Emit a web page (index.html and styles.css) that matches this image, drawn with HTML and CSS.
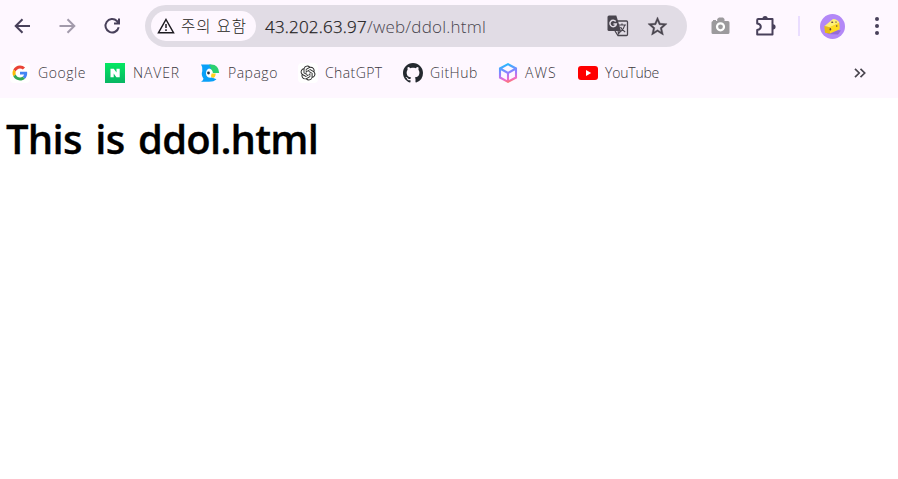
FILE: index.html
```html
<!DOCTYPE html>
<html lang="ko">
<head>
<meta charset="utf-8">
<title>ddol.html</title>
<link rel="stylesheet" href="styles.css">
</head>
<body>
<header class="browser">
  <div class="toolbar">
    <nav class="navigation">
      <svg class="icon" viewBox="0 0 20 20"><path class="line" d="M18 10H3.500M10.500 3.200 3.700 10l6.800 6.800"/></svg>
      <svg class="icon disabled" viewBox="0 0 20 20"><path class="line" d="M2.500 10H17M10.500 3.200l6.800 6.800-6.800 6.800"/></svg>
      <svg class="icon" viewBox="0 0 20 20"><path class="line" d="M16.700 11.300A6.700 6.700 0 1 1 14.900 5l2 2.200M17 2.600v5h-5"/></svg>
    </nav>
    <div class="omnibox">
      <div class="security">
        <svg class="warning" viewBox="0 0 18 16"><path d="M9 1.500 16.500 14.700h-15Z" fill="none" stroke="#1d1b20" stroke-width="1.500"/><path d="M9 6v4M9 11.200v1.800" stroke="#1d1b20" stroke-width="1.500"/></svg>
        <span>주의 요함</span>
      </div>
      <div class="address"><span class="host">43.202.63.97</span><span class="path">/web/ddol.html</span></div>
      <svg class="translate" viewBox="0 0 22 22"><path d="M9 6h10.500q1 0 1 1v12.500q0 1-1 1H11L8 16" fill="#e1dce5" stroke="#49454e" stroke-width="1.300"/><path d="M2 0.500h7.300L14 16H2Q.5 16 .5 14.500V2Q.5.5 2 .5Z" fill="#49454e"/><path d="m10.500 16.200h3.400l-2.600 4Z" fill="#49454e"/><path d="M8.700 6.500A3.200 3.200 0 1 0 9.300 9H6.500" fill="none" stroke="#e1dce5" stroke-width="1.500"/><path d="M12 10h7M15 8.500V10M17.800 10q-.8 4-4.600 7M13.500 12q1.500 3.200 4.700 5" fill="none" stroke="#49454e" stroke-width="1.200"/></svg>
      <svg class="star" viewBox="0 0 24 24"><path fill="#49454e" stroke="#49454e" stroke-width=".4" d="M22 9.240l-7.190-.62L12 2 9.190 8.630 2 9.240l5.460 4.730L5.820 21 12 17.270 18.180 21l-1.630-7.030L22 9.240zM12 15.400l-3.760 2.270 1-4.280-3.320-2.880 4.380-.38L12 6.100l1.710 4.040 4.380.38-3.320 2.880 1 4.280L12 15.400z"/></svg>
    </div>
    <svg class="camera" viewBox="0 0 19 18"><path fill="#9c9a9d" d="M2 4V3h3v1h1.200V2L8 .5h4L13.500 2v2H17q1.500 0 1.500 1.500v10Q18.500 17 17 17H2Q.5 17 .5 15.500v-10Q.5 4 2 4Z"/><circle cx="9.500" cy="9.800" r="3.500" fill="#9c9a9d" stroke="#fff" stroke-width="2.200"/></svg>
    <svg class="puzzle" viewBox="0 0 22 22"><path d="M3.200 4H17.500V19.500H2.200V15q3.600-.8 3.600-3.300T2.200 8.500V5q0-1 1-1Z" fill="none" stroke="#48405a" stroke-width="2" stroke-linejoin="round"/><path d="M7.500 3.500a2.600 2.600 0 0 1 5.200 0ZM18 9.200a2.600 2.600 0 0 1 0 5.200Z" fill="#48405a"/></svg>
    <span class="divider"></span>
    <svg class="avatar" viewBox="0 0 25 25"><circle cx="12.500" cy="12.500" r="12.500" fill="#b388f7"/><path d="m7 20 11 .5 3-4-8-1Z" fill="#956cd8"/><path d="M4.300 12.200 13 5q5 .3 6.300 4L10 13.300Z" fill="#fff173"/><path d="m4.300 12 5.700 1.200v6.500l-5-1Z" fill="#e8bd12"/><path d="m19.300 8.800.5 6.500-9.800 4.200v-6.400Z" fill="#ffdc1f"/><g fill="#604044"><ellipse cx="12.200" cy="8.300" rx="1.100" ry=".7"/><ellipse cx="16" cy="8" rx=".9" ry=".6"/><ellipse cx="10.400" cy="15.300" rx=".8" ry="1.200"/><circle cx="16.700" cy="12" r=".8"/></g></svg>
    <svg class="menu" viewBox="0 0 6 20"><g fill="#48405a"><circle cx="3" cy="3" r="2"/><circle cx="3" cy="10" r="2"/><circle cx="3" cy="17" r="2"/></g></svg>
  </div>
  <nav class="bookmarks">
    <div class="bookmark google"><svg viewBox="0 0 20 20"><rect width="20" height="20" rx="4" fill="#fff"/><g transform="translate(2.500 2.500) scale(.3125)"><path fill="#EA4335" d="M24 9.500c3.540 0 6.710 1.220 9.210 3.600l6.850-6.850C35.900 2.380 30.470 0 24 0 14.620 0 6.510 5.380 2.560 13.220l7.980 6.190C12.430 13.720 17.740 9.500 24 9.500z"/><path fill="#4285F4" d="M46.980 24.550c0-1.570-.15-3.090-.38-4.550H24v9.020h12.940c-.58 2.960-2.260 5.480-4.780 7.180l7.730 6c4.510-4.180 7.090-10.360 7.090-17.650z"/><path fill="#FBBC05" d="M10.530 28.590A14.500 14.500 0 0 1 9.770 24c0-1.600.27-3.140.76-4.590l-7.980-6.190A23.800 23.800 0 0 0 0 24c0 3.880.92 7.540 2.560 10.780z"/><path fill="#34A853" d="M24 48c6.480 0 11.930-2.130 15.890-5.810l-7.730-6c-2.150 1.450-4.920 2.300-8.160 2.300-6.260 0-11.570-4.220-13.470-9.910l-7.980 6.190C6.510 42.620 14.620 48 24 48z"/></g></svg><span>Google</span></div>
    <div class="bookmark naver"><svg viewBox="0 0 20 20"><defs><linearGradient id="naver" x2="0" y2="1"><stop stop-color="#04e862"/><stop offset="1" stop-color="#08b563"/></linearGradient></defs><path fill="url(#naver)" d="M0 0h20v20H0z"/><path fill="#fff" d="M5.500 5.700h3.300l2.700 3.900V5.700h3.200v8.600h-3.300L8.700 10.400v3.900H5.500z"/></svg><span>NAVER</span></div>
    <div class="bookmark papago"><svg viewBox="0 0 20 20"><path fill="#09a0f8" d="M1 1.500h10L13 10l-1 4.500 4.500 1.700Q14 18.700 9 18.700H1q2-1 2.500-3Q.8 12 2.300 8 3 4 1 1.500Z"/><path fill="#2bd071" d="M9 1.700q9.500-1.500 10.200 8.300H12Q11.500 5 9 1.700Z"/><path fill="#fff" d="M9 5.500q3.500.7 4 5l-1.500 4.300Q6.500 15.300 6 10.500 6 6.500 9 5.500Z"/><circle cx="8.500" cy="10" r="1.400" fill="#273044"/><path fill="#ffd321" d="M11.500 10.500h4.200q-.3 4-2.700 4.500l-2-1.500Z"/></svg><span>Papago</span></div>
    <div class="bookmark chatgpt"><svg viewBox="0 0 20 20"><rect x="0" width="20" height="20" rx="4" fill="#fff"/><path fill="#292929" transform="translate(2.600 2.600) scale(.62)" d="M22.282 9.821a5.985 5.985 0 0 0-.516-4.910 6.046 6.046 0 0 0-6.510-2.900A6.065 6.065 0 0 0 4.981 4.182a5.985 5.985 0 0 0-3.998 2.900 6.046 6.046 0 0 0 .743 7.097 5.980 5.980 0 0 0 .511 4.911 6.051 6.051 0 0 0 6.515 2.900A5.985 5.985 0 0 0 13.260 24a6.056 6.056 0 0 0 5.772-4.206 5.990 5.990 0 0 0 3.998-2.900 6.056 6.056 0 0 0-.748-7.073zm-9.022 12.608a4.476 4.476 0 0 1-2.876-1.041l.142-.08 4.778-2.758a.795.795 0 0 0 .393-.681v-6.737l2.020 1.169a.071.071 0 0 1 .038.052v5.583a4.504 4.504 0 0 1-4.495 4.493zM3.600 18.304a4.471 4.471 0 0 1-.535-3.014l.142.085 4.783 2.759a.771.771 0 0 0 .781 0l5.843-3.369v2.332a.080.080 0 0 1-.033.062L9.740 19.950a4.499 4.499 0 0 1-6.140-1.646zM2.341 7.896a4.485 4.485 0 0 1 2.366-1.973V11.600a.766.766 0 0 0 .388.677l5.814 3.354-2.020 1.169a.076.076 0 0 1-.071 0l-4.830-2.787A4.504 4.504 0 0 1 2.341 7.872zm16.596 3.856l-5.833-3.387L15.119 7.200a.076.076 0 0 1 .071 0l4.830 2.791a4.494 4.494 0 0 1-.676 8.105v-5.678a.790.790 0 0 0-.407-.667zm2.011-3.023l-.142-.085-4.774-2.782a.776.776 0 0 0-.785 0L9.409 9.230V6.897a.066.066 0 0 1 .028-.061l4.830-2.787a4.499 4.499 0 0 1 6.680 4.660zM8.307 12.863l-2.020-1.164a.080.080 0 0 1-.038-.057V6.075a4.499 4.499 0 0 1 7.376-3.454l-.142.081-4.778 2.758a.795.795 0 0 0-.393.681zm1.098-2.366l2.602-1.500 2.607 1.500v2.999l-2.597 1.500-2.607-1.500z"/></svg><span>ChatGPT</span></div>
    <div class="bookmark github"><svg viewBox="0 0 16 16"><path fill="#24292f" d="M8 0C3.580 0 0 3.580 0 8c0 3.540 2.290 6.530 5.470 7.590.4.070.55-.17.55-.38 0-.19-.01-.82-.01-1.490-2.010.37-2.530-.49-2.690-.94-.09-.23-.48-.94-.82-1.130-.28-.15-.68-.52-.01-.53.63-.01 1.080.58 1.230.82.72 1.210 1.870.87 2.330.66.070-.52.28-.87.51-1.070-1.780-.2-3.640-.89-3.640-3.950 0-.87.31-1.590.82-2.150-.08-.2-.36-1.020.08-2.120 0 0 .67-.21 2.200.82.64-.18 1.320-.27 2-.27s1.360.09 2 .27c1.530-1.040 2.200-.82 2.200-.82.44 1.100.16 1.920.08 2.120.51.56.82 1.270.82 2.150 0 3.070-1.870 3.750-3.650 3.950.29.25.54.73.54 1.480 0 1.070-.01 1.930-.01 2.200 0 .21.15.46.55.38A8.010 8.010 0 0 0 16 8c0-4.420-3.580-8-8-8z"/></svg><span>GitHub</span></div>
    <div class="bookmark aws"><svg viewBox="0 0 20 20"><defs><linearGradient id="cube" gradientUnits="userSpaceOnUse" x1="8" y1="0" x2="12" y2="20"><stop stop-color="#18bfff"/><stop offset=".52" stop-color="#9b7cff"/><stop offset=".8" stop-color="#f06bca"/><stop offset="1" stop-color="#ff7b53"/></linearGradient></defs><path d="M10 1.200 18 5.500v9L10 18.800 2 14.500v-9ZM2 5.500 10 10l8-4.500M10 10v8.500" fill="none" stroke="url(#cube)" stroke-width="2.100"/></svg><span>AWS</span></div>
    <div class="bookmark youtube"><svg viewBox="0 0 20 20"><rect y="3" width="20" height="14" rx="3" fill="#f00"/><path fill="#fff" d="m8 7 5.200 3L8 13z"/></svg><span>YouTube</span></div>
    <svg class="overflow" viewBox="0 0 12 10"><path d="m1 .8 4.200 4.200L1 9.200M6.500.8 10.700 5 6.500 9.200" fill="none" stroke="#49454e" stroke-width="1.700"/></svg>
  </nav>
</header>
<main class="page"><h1>This is ddol.html</h1></main>
</body>
</html>
```
FILE: styles.css
```css
* { box-sizing: border-box; }
body { margin: 0; height: 479px; overflow: hidden; background: #fff; font-family: "Open Sans", "Noto Sans CJK KR", sans-serif; }
svg { display: block; flex: none; }
span { white-space: nowrap; }
.browser { height: 98px; background: #fef7ff; }
.toolbar { display: flex; align-items: center; height: 52px; }
.navigation { display: flex; gap: 25px; width: 145px; padding-left: 12px; }
.icon { width: 20px; height: 20px; }
.disabled { opacity: .5; }
.line { fill: none; stroke: #48405a; stroke-width: 2; }
.omnibox { display: flex; align-items: center; width: 542px; height: 42px; padding-left: 6px; border-radius: 21px; background: #e1dce5; }
.security { display: flex; align-items: center; gap: 6px; width: 105px; height: 30px; padding-left: 6px; border-radius: 15px; background: #fef7ff; color: #1d1b20; font: 300 15.5px/28px "Noto Sans CJK KR", sans-serif; letter-spacing: .9px; }
.security span { padding-bottom: 2px; }
.warning { width: 18px; height: 16px; }
.address { width: 342px; padding: 1px 0 0 9px; font-size: 17px; font-weight: 300; line-height: 30px; }
.host { color: #1d1b20; letter-spacing: .2px; -webkit-text-stroke: .25px #1d1b20; }
.path { color: #49454e; letter-spacing: .22px; }
.translate { width: 22px; height: 22px; margin-left: 9px; }
.star { width: 23px; height: 23px; margin-left: 17px; }
.camera { width: 19px; height: 18px; margin-left: 24px; }
.puzzle { width: 22px; height: 22px; margin-left: 25px; }
.divider { width: 2px; height: 20px; margin-left: 21px; background: #eaddff; }
.avatar { width: 25px; height: 25px; margin-left: 20px; }
.menu { width: 6px; height: 20px; margin-left: 29px; }
.bookmarks { display: grid; grid-template-columns: 95px 95px 98px 105px 95px 80px 276px 12px; align-items: center; height: 42px; padding-left: 10px; color: #3b3740; }
.bookmark { display: flex; align-items: center; gap: 8px; font-size: 14px; font-weight: 300; line-height: 24px; letter-spacing: .55px; }
.bookmark svg { width: 20px; height: 20px; }
.chatgpt, .github, .aws, .youtube { gap: 7px; }
.naver { letter-spacing: .85px; }
.papago { letter-spacing: .5px; }
.chatgpt { letter-spacing: .4px; }
.aws { letter-spacing: 1px; }
.youtube { letter-spacing: -.2px; }
.overflow { width: 12px; height: 10px; }
.page { padding: 11px 0 0 6px; }
h1 { margin: 0; color: #000; font-size: 40px; font-weight: 600; line-height: 60px; letter-spacing: -.75px; word-spacing: 4px; white-space: nowrap; -webkit-text-stroke: .3px #000; }
```
